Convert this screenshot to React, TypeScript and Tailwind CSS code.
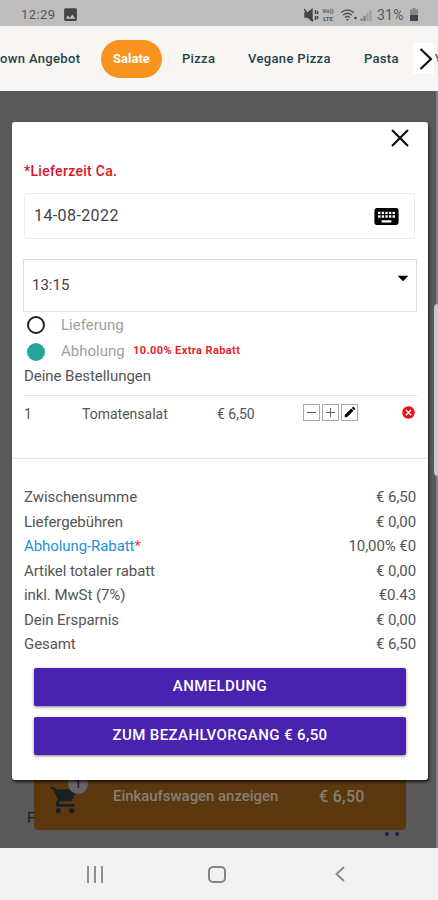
import { MdKeyboard, MdShoppingCart, MdEdit, MdCancel, MdArrowDropDown, MdImage } from "react-icons/md";

const totals = [
  { label: "Zwischensumme", value: "€ 6,50" },
  { label: "Liefergebühren", value: "€ 0,00" },
  { label: "Abholung-Rabatt", value: "10,00% €0", highlight: true },
  { label: "Artikel totaler rabatt", value: "€ 0,00" },
  { label: "inkl. MwSt (7%)", value: "€0.43" },
  { label: "Dein Ersparnis", value: "€ 0,00" },
  { label: "Gesamt", value: "€ 6,50" }
];

function StatusBar() {
  return (
    <header className="h-[26px] bg-[#bdbdbd] flex items-center pl-[21px] pr-[19px] pt-[3px] text-[#555]">
      <span className="text-[13px] leading-4 tracking-[0.4px] w-[35px] whitespace-nowrap">12:29</span>
      <MdImage className="ml-[6px] w-[17px] h-[17px] text-[#444]" />
      <div className="ml-auto flex items-center">
        <svg width="15" height="14" viewBox="0 0 15 14" fill="none" stroke="#444" strokeWidth="1.4">
          <path d="M1 5h2.5L8 1.5v11L3.5 9H1z" fill="#444" />
          <path d="M0 1l9 12M11.5 2v4M11.5 8v4M13.5 3v3M13.5 8v3" />
        </svg>
        <span className="ml-[2px] w-[14px] flex flex-col gap-px text-[6px] leading-[7px] font-bold text-center">
          <span>Vo))</span>
          <span>LTE</span>
        </span>
        <svg className="ml-[5px]" width="18" height="14" viewBox="0 0 18 14" fill="none" stroke="#555" strokeWidth="1.4">
          <path d="M1 4.5q6.500-5 13 0M3 7q4.500-3.500 9 0M5 9.500q2.500-2 5 0" />
          <path d="M7.500 13l-1.500-2h3z" fill="#555" stroke="none" />
          <circle cx="15.500" cy="10" r="1.300" fill="#444" stroke="none" />
        </svg>
        <svg className="ml-[2px]" width="12" height="12" viewBox="0 0 12 12" strokeWidth="2">
          <path d="M1.500 12V9.500M4.500 12V7" stroke="#777" />
          <path d="M7.500 12V4M10.500 12V1" stroke="#a0a0a0" />
        </svg>
        <span className="ml-[5px] w-[29px] text-[14px] leading-4 tracking-[0.2px] whitespace-nowrap">31%</span>
        <svg className="ml-[4px] mr-px" width="8" height="13" viewBox="0 0 8 13">
          <path d="M2.500 0h3v1.500H8V13H0V1.500h2.500z" fill="#858585" />
          <path d="M0 7h8v6H0z" fill="#444" />
        </svg>
      </div>
    </header>
  );
}

function CategoryTabs() {
  return (
    <nav className="h-[65px] bg-[#f8f5f2] flex items-center overflow-hidden text-[13px] font-medium text-[#24444c] whitespace-nowrap">
      <span className="w-[101px] shrink-0 tracking-[0.35px]">own Angebot</span>
      <span className="w-[61px] h-[38px] shrink-0 rounded-full bg-[#f7931e] text-white font-bold flex items-center justify-center">Salate</span>
      <span className="ml-[20px] w-[66px] shrink-0 tracking-[0.3px]">Pizza</span>
      <span className="w-[116px] shrink-0 tracking-[0.35px]">Vegane Pizza</span>
      <span className="w-[49px] shrink-0 tracking-[0.3px]">Pasta</span>
      <span className="w-[21px] h-[31px] bg-white flex items-center justify-end shrink-0 pr-px">
        <svg width="14" height="22" viewBox="0 0 14 22" fill="none" stroke="#111" strokeWidth="2.2">
          <path d="M1.500 1l10.500 10L1.500 21" />
        </svg>
      </span>
      <span className="ml-px shrink-0 text-[10px]">Y</span>
    </nav>
  );
}

function OrderDialog() {
  return (
    <section className="w-[416px] h-[658px] bg-white rounded-[3px] shadow-[1px_2px_3px_rgba(0,0,0,0.7)] text-[#555] text-[14px]">
      <div className="h-[31px] flex justify-end pt-[6px] pr-[18px]">
        <svg width="20" height="20" viewBox="0 0 20 20" fill="none" stroke="#111" strokeWidth="2.2">
          <path d="M2 2l16 16M18 2L2 18" />
        </svg>
      </div>
      <div className="pl-[12px] pr-[11px]">
        <p className="h-[40px] pt-[8px] leading-5 font-medium text-[#d9151f] tracking-[0.3px]">*Lieferzeit Ca.</p>
        <div className="w-[391px] h-[46px] border border-[#ececec] rounded-[4px] flex items-center justify-between pl-[9px] pr-[13px] text-[16px] text-[#444]">
          <span className="tracking-[0.4px]">14-08-2022</span>
          <MdKeyboard className="w-[29px] h-[29px] text-black" />
        </div>
        <div className="mt-[20px] w-[394px] h-[53px] -ml-px border border-[#dedede] flex items-center justify-between pl-[8px]">
          <span className="text-[15px] text-[#444]">13:15</span>
          <MdArrowDropDown className="w-[26px] h-[26px] text-black mb-[16px]" />
        </div>
        <div className="h-[26px] pl-[3px] flex items-center text-[#a0a0a0] text-[15px]">
          <span className="w-[18px] h-[18px] rounded-full border-2 border-[#222]" />
          <span className="ml-[16px]">Lieferung</span>
        </div>
        <div className="h-[27px] pl-[3px] flex items-center text-[#a0a0a0] text-[15px]">
          <span className="w-[18px] h-[18px] rounded-full bg-[#26a69a]" />
          <span className="ml-[16px] w-[72px]">Abholung</span>
          <span className="text-[11px] font-bold text-[#ee1c25] tracking-[0.4px]">10.00% Extra Rabatt</span>
        </div>
        <p className="h-[31px] leading-[22px] text-[15px] tracking-[-0.05px] border-b border-[#e2e2e2]">Deine Bestellungen</p>
        <div className="h-[36px] flex items-center whitespace-nowrap">
          <span className="w-[58px]">1</span>
          <span className="w-[135px]">Tomatensalat</span>
          <span className="w-[86px]">€ 6,50</span>
          <div className="flex gap-[2px] mb-[4px]">
            <span className="w-[17px] h-[17px] border border-[#aaa] flex items-center justify-center">
              <span className="w-[9px] h-px bg-[#555]" />
            </span>
            <span className="w-[17px] h-[17px] border border-[#aaa] flex items-center justify-center">
              <svg width="9" height="9" viewBox="0 0 9 9" stroke="#666">
                <path d="M0 4.500h9M4.500 0v9" />
              </svg>
            </span>
            <span className="w-[17px] h-[17px] border border-[#aaa] flex items-center justify-center">
              <MdEdit className="w-[14px] h-[14px] text-black" />
            </span>
          </div>
          <MdCancel className="ml-auto mr-px mb-[4px] w-[15px] h-[15px] text-[#e8131d]" />
        </div>
      </div>
      <div className="h-[27px] border-b border-[#e2e2e2]" />
      <dl className="pt-[26px] pl-[12px] pr-[12px] text-[15px] tracking-[-0.08px]">
        {totals.map((row) => (
          <div key={row.label} className="h-[24.5px] flex items-center justify-between">
            {row.highlight ? (
              <dt className="text-[#1c93d4]">Abholung-Rabatt<span className="text-[#ee3c32]">*</span></dt>
            ) : (
              <dt>{row.label}</dt>
            )}
            <dd>{row.value}</dd>
          </div>
        ))}
      </dl>
      <div className="mt-[11px] ml-[22px] w-[372px] flex flex-col gap-[11px] text-[15px] font-medium text-white tracking-[0.4px]">
        <button className="h-[38px] bg-[#4a22b0] rounded-[2px] shadow-[0_1px_3px_rgba(0,0,0,0.5)]">ANMELDUNG</button>
        <button className="h-[38px] bg-[#4a22b0] rounded-[2px] shadow-[0_1px_3px_rgba(0,0,0,0.5)]">ZUM BEZAHLVORGANG € 6,50</button>
      </div>
    </section>
  );
}

function CartBar() {
  return (
    <div className="ml-[34px] w-[372px] h-[50px] bg-[#5c380f] rounded-b-[4px] flex text-[#858075] font-medium text-[15px] whitespace-nowrap">
      <div className="relative w-[79px] pl-[15px] pt-[4px]">
        <MdShoppingCart className="w-[32px] h-[32px] text-[#1b2025]" />
        <span className="absolute left-[34px] -top-[6px] w-[20px] h-[20px] rounded-full bg-[#666] text-[#222] text-[13px] leading-5 text-center">1</span>
      </div>
      <span className="pt-[5px] w-[206px] tracking-[-0.05px]">Einkaufswagen anzeigen</span>
      <span className="pt-[5px] text-[16px] tracking-[0.3px]">€ 6,50</span>
    </div>
  );
}

export default function App() {
  return (
    <div className="w-[438px] h-[900px] overflow-hidden flex flex-col font-['Roboto',sans-serif]">
      <StatusBar />
      <CategoryTabs />
      <main className="relative h-[757px] bg-[#595959] pt-[689px] border-r-2 border-[#828282]">
        <CartBar />
        <span className="absolute left-[27px] top-[717px] w-[7px] overflow-hidden text-[15px] leading-5 text-[#222]">F</span>
        <span className="absolute left-[385px] top-[741px] flex gap-[6px]">
          <i className="w-1 h-1 rounded-full bg-[#231b55]" />
          <i className="w-1 h-1 rounded-full bg-[#231b55]" />
        </span>
        <div className="absolute left-[12px] top-[31px]">
          <OrderDialog />
        </div>
        <span className="absolute -right-[2px] top-[213px] w-[4px] h-[172px] rounded-l-[4px] bg-[#c9c9c9]" />
      </main>
      <footer className="h-[52px] bg-[#f2f2f2] flex items-center pl-[87px] text-[#858585]">
        <svg width="16" height="17" viewBox="0 0 16 17" stroke="currentColor" strokeWidth="1.8">
          <path d="M1 0v17M8 0v17M15 0v17" />
        </svg>
        <span className="ml-[105px] w-[18px] h-[17px] border-2 border-[#858585] rounded-[5px]" />
        <svg className="ml-[109px]" width="10" height="16" viewBox="0 0 10 16" fill="none" stroke="currentColor" strokeWidth="1.8">
          <path d="M9 1L1.500 8L9 15" />
        </svg>
      </footer>
    </div>
  );
}
